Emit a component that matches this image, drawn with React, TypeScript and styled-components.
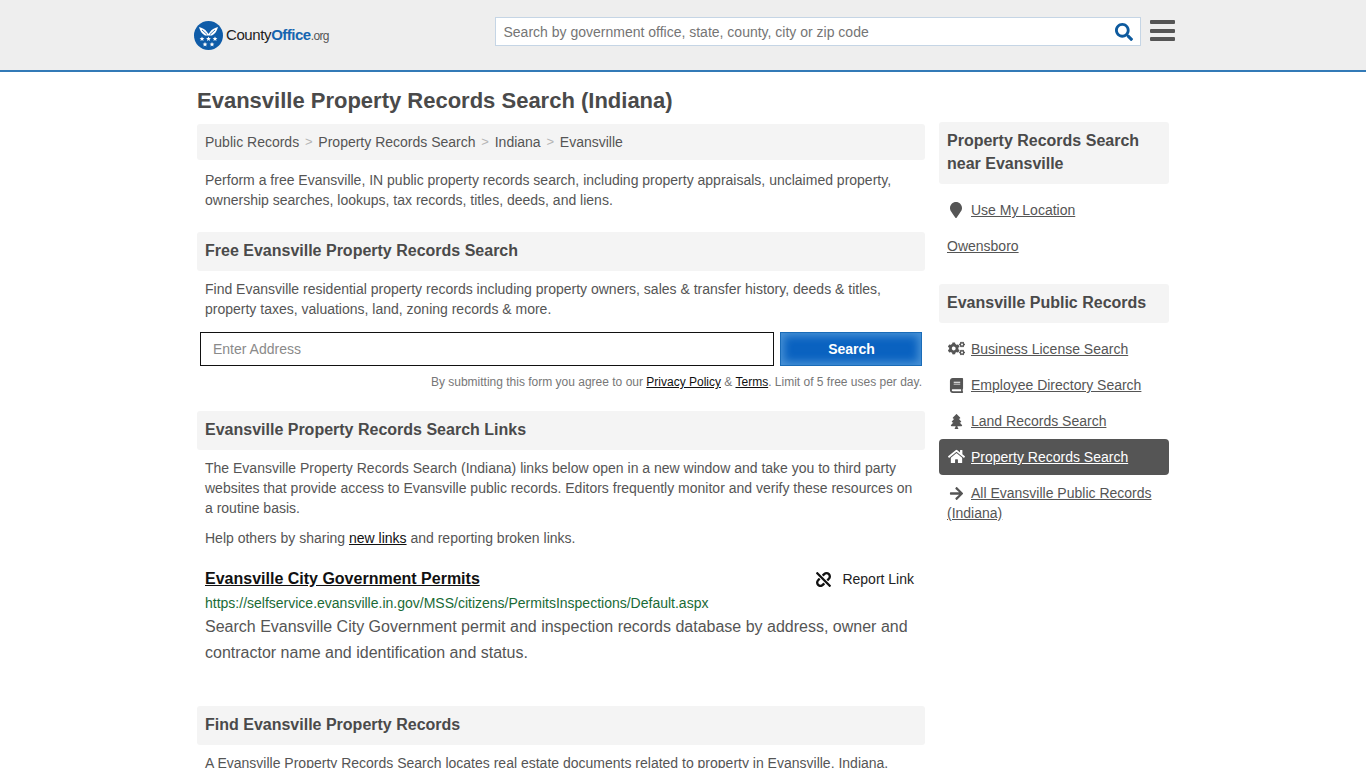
import React from "react";
import styled, { createGlobalStyle } from "styled-components";
import {
  FaArrowRight,
  FaBook,
  FaCogs,
  FaHome,
  FaMapMarker,
  FaSearch,
  FaTree,
  FaUnlink,
} from "react-icons/fa";

const GlobalStyle = createGlobalStyle`
  html, body {
    margin: 0;
    padding: 0;
    height: 768px;
    overflow: hidden;
    background: #fff;
  }
  body {
    font-family: "Liberation Sans", Arial, sans-serif;
    font-size: 14px;
    line-height: 20px;
    color: #555;
  }
  a {
    color: inherit;
  }
`;

const Header = styled.header`
  box-sizing: border-box;
  height: 72px;
  background: #eeeeee;
  border-bottom: 2px solid #337ab7;
  display: flex;
  align-items: center;
  padding: 0 191px 8px 194px;
`;

const Logo = styled.a`
  display: flex;
  align-items: center;
  gap: 3px;
  width: 301px;
  margin-top: 8px;
  color: #222;
  text-decoration: none;
  font-size: 15px;
  letter-spacing: -0.4px;
`;

const LogoBlue = styled.span`
  color: #1565b0;
  font-weight: 700;
  letter-spacing: -0.5px;
`;

const LogoOrg = styled.span`
  color: #555;
  font-size: 12px;
  letter-spacing: -0.6px;
`;

const SearchBox = styled.div`
  width: 646px;
  height: 29px;
  box-sizing: border-box;
  border: 1px solid #c5d5e5;
  background: #fff;
  display: flex;
  align-items: center;
  justify-content: space-between;
  padding: 1px 7px 0 7.5px;
  font-size: 14px;
  color: #757575;
  svg {
    color: #0d5a9e;
    font-size: 18px;
  }
`;

const MenuButton = styled.div`
  margin: 0 0 1px 9px;
  width: 25px;
  display: flex;
  flex-direction: column;
  gap: 4.5px;
  span {
    height: 4px;
    background: #555;
    border-radius: 1px;
  }
`;

const Page = styled.div`
  width: 972px;
  margin: 0 0 0 197px;
`;

const Title = styled.h1`
  margin: 0;
  padding-top: 16px;
  height: 36px;
  font-size: 22px;
  line-height: 26px;
  font-weight: 700;
  color: #4a4a4a;
`;

const Columns = styled.div`
  display: flex;
  gap: 14px;
  align-items: flex-start;
`;

const Main = styled.main`
  width: 728px;
`;

const Side = styled.aside`
  width: 230px;
  margin-top: -2px;
`;

const Breadcrumbs = styled.nav`
  height: 36px;
  background: #f4f4f4;
  border-radius: 3px;
  padding: 0 8px;
  display: flex;
  align-items: center;
  color: #555;
  i {
    font-style: normal;
    color: #b5b5b5;
    margin: 0 5.8px;
    font-size: 13px;
  }
`;

const Text = styled.p<{ $mt?: number; $mb?: number }>`
  margin: ${(p) => p.$mt ?? 0}px 0 ${(p) => p.$mb ?? 0}px;
  padding: 0 8px;
  a {
    color: #111;
  }
`;

const SectionBar = styled.h2<{ $mt: number; $mb: number }>`
  margin: ${(p) => p.$mt}px 0 ${(p) => p.$mb}px;
  height: 39px;
  line-height: 38px;
  padding: 0 8px;
  background: #f4f4f4;
  border-radius: 3px;
  font-size: 16px;
  font-weight: 700;
  color: #4a4a4a;
`;

const AddressForm = styled.div`
  display: flex;
  gap: 6px;
  margin: 13px 3px 0;
`;

const AddressInput = styled.div`
  flex: 1;
  height: 34px;
  box-sizing: border-box;
  border: 1px solid #111;
  padding: 0 12px;
  line-height: 32px;
  color: #8a8a8a;
`;

const SearchButton = styled.div`
  width: 142px;
  height: 34px;
  box-sizing: border-box;
  border: 1px solid #1a6cb8;
  padding-left: 1px;
  background: #0a62c0;
  box-shadow: inset 0 0 9px 3px #4a93d6;
  color: #fff;
  font-weight: 700;
  text-align: center;
  line-height: 32px;
`;

const Disclaimer = styled.div`
  margin: 6px 3px 0;
  text-align: right;
  font-size: 12px;
  line-height: 20px;
  color: #777;
  a {
    color: #111;
  }
`;

const ResultHead = styled.div`
  display: flex;
  justify-content: space-between;
  align-items: center;
  padding: 0 11px 0 8px;
  margin-top: 19px;
  height: 24px;
`;

const ResultTitle = styled.a`
  font-size: 16px;
  font-weight: 700;
  color: #111;
`;

const ReportLink = styled.div`
  display: flex;
  align-items: center;
  gap: 11px;
  color: #222;
  svg {
    font-size: 15px;
    color: #111;
  }
`;

const ResultUrl = styled.div`
  padding: 0 8px;
  margin-top: 2px;
  color: #1a6b36;
`;

const ResultBody = styled.p`
  margin: 1px 0 0;
  padding: 0 8px;
  font-size: 16px;
  line-height: 26px;
  color: #555;
`;

const SideHeading = styled.h3<{ $mt?: number }>`
  margin: ${(p) => p.$mt ?? 0}px 0 0;
  padding: 7px 8px 9px;
  background: #f4f4f4;
  border-radius: 3px;
  font-size: 16px;
  line-height: 23px;
  font-weight: 700;
  color: #4a4a4a;
`;

const SideList = styled.div<{ $mt: number }>`
  margin-top: ${(p) => p.$mt}px;
`;

const SideItem = styled.div<{ $active?: boolean }>`
  padding: 8px;
  border-radius: 4px;
  line-height: 20px;
  color: ${(p) => (p.$active ? "#fff" : "#555")};
  background: ${(p) => (p.$active ? "#555" : "transparent")};
`;

const IconSlot = styled.span<{ $size?: number }>`
  display: inline-flex;
  justify-content: center;
  align-items: center;
  width: 18px;
  height: 16px;
  margin-right: 6px;
  vertical-align: -3px;
  svg {
    font-size: ${(p) => p.$size ?? 15}px;
  }
`;

const sideLinks = [
  { icon: <FaCogs />, size: 17, label: "Business License Search" },
  { icon: <FaBook />, size: 15, label: "Employee Directory Search" },
  { icon: <FaTree />, size: 15, label: "Land Records Search" },
  { icon: <FaHome />, size: 17, label: "Property Records Search", active: true },
  { icon: <FaArrowRight />, size: 15, label: "All Evansville Public Records (Indiana)" },
];

export default function App() {
  return (
    <>
      <GlobalStyle />
      <Header>
        <Logo>
          <svg width="29" height="29" viewBox="0 0 29 29">
            <circle cx="14.5" cy="14.5" r="14.5" fill="#0f5ca8" />
            <path d="M5 6c3 1 6 2 8 5l1.500 2 1.500-2c2-3 5-4 8-5-1 4-3 7-6 8.500h-7C8 13 6 10 5 6z" fill="#fff" />
            <path d="M8 9l5 4.500M21 9l-5 4.500" stroke="#0f5ca8" strokeWidth="0.8" />
            <g fill="#fff">
              <path d="M8 15.500l.7 1.600 1.700.1-1.300 1.100.4 1.700L8 19.100l-1.500.9.4-1.700-1.300-1.100 1.700-.1z" />
              <path d="M14.500 15.500l.7 1.600 1.700.1-1.300 1.100.4 1.700-1.500-.9-1.500.9.4-1.700-1.300-1.100 1.700-.1z" />
              <path d="M21 15.500l.7 1.600 1.700.1-1.300 1.100.4 1.700-1.500-.9-1.500.9.4-1.700-1.300-1.100 1.700-.1z" />
              <path d="M11 21l.7 1.600 1.700.1-1.300 1.100.4 1.700-1.500-.9-1.500.9.4-1.700-1.300-1.100 1.700-.1z" />
              <path d="M18 21l.7 1.600 1.700.1-1.300 1.100.4 1.700-1.500-.9-1.500.9.4-1.700-1.300-1.100 1.700-.1z" />
            </g>
          </svg>
          <span>
            County<LogoBlue>Office</LogoBlue>
            <LogoOrg>.org</LogoOrg>
          </span>
        </Logo>
        <SearchBox>
          <span>Search by government office, state, county, city or zip code</span>
          <FaSearch />
        </SearchBox>
        <MenuButton>
          <span />
          <span />
          <span />
        </MenuButton>
      </Header>
      <Page>
        <Title>Evansville Property Records Search (Indiana)</Title>
        <Columns>
          <Main>
            <Breadcrumbs>
              Public Records<i>&gt;</i>Property Records Search<i>&gt;</i>Indiana<i>&gt;</i>Evansville
            </Breadcrumbs>
            <Text $mt={10}>
              Perform a free Evansville, IN public property records search, including property appraisals, unclaimed
              property, ownership searches, lookups, tax records, titles, deeds, and liens.
            </Text>
            <SectionBar $mt={22} $mb={8}>Free Evansville Property Records Search</SectionBar>
            <Text>
              Find Evansville residential property records including property owners, sales &amp; transfer history,
              deeds &amp; titles, property taxes, valuations, land, zoning records &amp; more.
            </Text>
            <AddressForm>
              <AddressInput>Enter Address</AddressInput>
              <SearchButton>Search</SearchButton>
            </AddressForm>
            <Disclaimer>
              By submitting this form you agree to our <a href="#">Privacy Policy</a> &amp; <a href="#">Terms</a>. Limit
              of 5 free uses per day.
            </Disclaimer>
            <SectionBar $mt={19} $mb={8}>Evansville Property Records Search Links</SectionBar>
            <Text $mb={10}>
              The Evansville Property Records Search (Indiana) links below open in a new window and take you to third
              party websites that provide access to Evansville public records. Editors frequently monitor and verify
              these resources on a routine basis.
            </Text>
            <Text>
              Help others by sharing <a href="#">new links</a> and reporting broken links.
            </Text>
            <ResultHead>
              <ResultTitle href="#">Evansville City Government Permits</ResultTitle>
              <ReportLink>
                <FaUnlink />
                Report Link
              </ReportLink>
            </ResultHead>
            <ResultUrl>https://selfservice.evansville.in.gov/MSS/citizens/PermitsInspections/Default.aspx</ResultUrl>
            <ResultBody>
              Search Evansville City Government permit and inspection records database by address, owner and contractor
              name and identification and status.
            </ResultBody>
            <SectionBar $mt={40} $mb={8}>Find Evansville Property Records</SectionBar>
            <Text>
              A Evansville Property Records Search locates real estate documents related to property in Evansville,
              Indiana.
            </Text>
          </Main>
          <Side>
            <SideHeading>Property Records Search near Evansville</SideHeading>
            <SideList $mt={8}>
              <SideItem>
                <IconSlot $size={16}><FaMapMarker /></IconSlot>
                <a href="#">Use My Location</a>
              </SideItem>
              <SideItem>
                <a href="#">Owensboro</a>
              </SideItem>
            </SideList>
            <SideHeading $mt={20}>Evansville Public Records</SideHeading>
            <SideList $mt={8}>
              {sideLinks.map((link) => (
                <SideItem key={link.label} $active={link.active}>
                  <IconSlot $size={link.size}>{link.icon}</IconSlot>
                  <a href="#">{link.label}</a>
                </SideItem>
              ))}
            </SideList>
          </Side>
        </Columns>
      </Page>
    </>
  );
}
